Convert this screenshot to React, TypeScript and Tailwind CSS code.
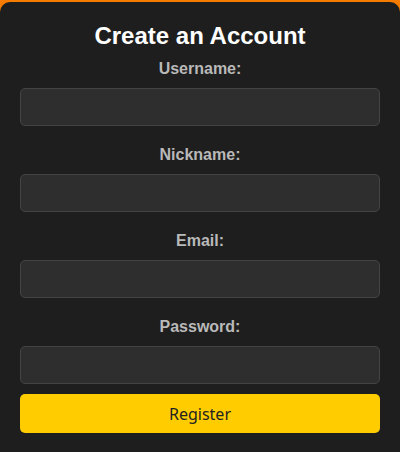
const fields = ["Username:", "Nickname:", "Email:", "Password:"];

export default function App() {
  return (
    <div className="h-[452px] w-[400px] bg-[#f57c00] pt-[2px] overflow-hidden">
      <form
        className="h-[460px] rounded-[10px] bg-[#1e1e1e] px-5 pt-5 flex flex-col"
        style={{ fontFamily: '"Liberation Sans", Arial, sans-serif' }}
        onSubmit={(e) => e.preventDefault()}
      >
        <h2 className="text-center text-[24px] leading-[28px] font-bold text-white mb-[10px]">
          Create an Account
        </h2>
        {fields.map((f, i) => (
          <div key={f} className={i < fields.length - 1 ? "mb-[20px]" : "mb-[10px]"}>
            <label className="block text-center text-[16px] leading-[18px] font-bold text-[#b9b9b9] mb-[10px]">
              {f}
            </label>
            <input
              type={f === "Password:" ? "password" : f === "Email:" ? "email" : "text"}
              className="block w-full h-[38px] rounded-[5px] border border-[#444444] bg-[#2e2e2e] px-2 text-white outline-none"
            />
          </div>
        ))}
        <button
          type="submit"
          className="h-[39px] w-full rounded-[5px] bg-[#ffcc00] text-[16px] text-[#222222]"
          style={{ fontFamily: '"Noto Sans", sans-serif' }}
        >
          Register
        </button>
      </form>
    </div>
  );
}
